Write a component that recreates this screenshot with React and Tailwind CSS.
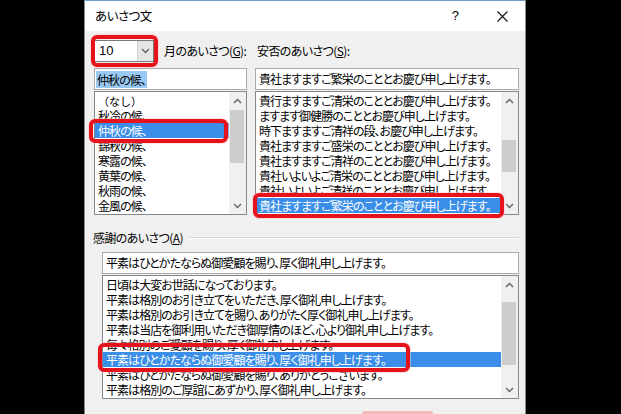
import React from "react";

const jp = "font-['Noto_Sans_CJK_JP',sans-serif] [font-feature-settings:'palt'] tracking-[-0.95px]";

function Chevron({ dir = "down" }) {
  return (
    <svg width="9" height="6" viewBox="0 0 9 6">
      <path
        d={dir === "up" ? "M1 5 L4.5 1.5 L8 5" : "M1 1 L4.5 4.5 L8 1"}
        fill="none"
        stroke="#606060"
        strokeWidth="1.3"
      />
    </svg>
  );
}

function ScrollBar({ thumbTop, thumbHeight }) {
  return (
    <div className="relative w-[17px] h-full bg-[#f0f0f0] shrink-0">
      <div className="h-[17px] flex items-center justify-center">
        <Chevron dir="up" />
      </div>
      <div
        className="absolute left-[1px] right-[2px] bg-[#cdcdcd]"
        style={{ top: thumbTop, height: thumbHeight }}
      />
      <div className="absolute bottom-0 left-0 right-0 h-[17px] flex items-center justify-center">
        <Chevron />
      </div>
    </div>
  );
}

function ListBox({ items, selected, thumbTop, thumbHeight, pad = "pl-[3px]" }) {
  return (
    <div className="flex h-[124px] border border-[#828790] bg-white">
      <div className="flex-1 overflow-hidden pt-[1px]">
        {items.map((t, i) => (
          <div
            key={i}
            className={`h-[15px] leading-[15px] whitespace-nowrap ${pad} ${
              i === selected ? "bg-[#3a8ee8] text-white" : "text-black"
            }`}
          >
            {t}
          </div>
        ))}
      </div>
      <ScrollBar thumbTop={thumbTop} thumbHeight={thumbHeight} />
    </div>
  );
}

const monthItems = [
  <span className="[font-feature-settings:normal] tracking-[0px] text-[11px]">（なし）</span>,
  "秋冷の候、",
  "仲秋の候、",
  "錦秋の候、",
  "寒露の候、",
  "黄葉の候、",
  "秋雨の候、",
  "金風の候、",
];

const safeItems = [
  "貴行ますますご清栄のこととお慶び申し上げます。",
  "ますます御健勝のこととお慶び申し上げます。",
  "時下ますますご清祥の段、お慶び申し上げます。",
  "貴社ますますご盛栄のこととお慶び申し上げます。",
  "貴社ますますご清祥のこととお慶び申し上げます。",
  "貴社いよいよご清栄のこととお慶び申し上げます。",
  "貴社いよいよご清祥のこととお慶び申し上げます。",
  "貴社ますますご繁栄のこととお慶び申し上げます。",
];

const thanksItems = [
  "日頃は大変お世話になっております。",
  "平素は格別のお引き立てをいただき、厚く御礼申し上げます。",
  "平素は格別のお引き立てを賜り、ありがたく厚く御礼申し上げます。",
  "平素は当店を御利用いただき御厚情のほど、心より御礼申し上げます。",
  "毎々格別のご愛顧を賜り、厚く御礼申し上げます。",
  "平素はひとかたならぬ御愛顧を賜り、厚く御礼申し上げます。",
  "平素はひとかたならぬ御愛顧を賜り、ありがとうございます。",
  "平素は格別のご厚誼にあずかり、厚く御礼申し上げます。",
];

function RedBox({ className }) {
  return (
    <div
      className={`absolute border-[4px] border-[#e5131b] rounded-[6px] shadow-[0_0_0_1px_rgba(255,200,200,0.5)] ${className}`}
    />
  );
}

export default function App() {
  return (
    <div className={`relative w-[621px] h-[414px] bg-black overflow-hidden text-[12px] text-black ${jp}`}>
      <div className="flex h-full pl-[84px]">
        <div className="w-[442px] h-full flex flex-col border-x border-[#8a8a8a] border-t border-t-[#6f9bc8]">
          {/* title bar */}
          <div className="h-[30px] bg-white flex items-center pl-[10px] shrink-0">
            <span className="text-[12.5px] tracking-[-0.5px]">あいさつ文</span>
            <span className="ml-auto text-[13px] font-['Liberation_Sans',sans-serif] tracking-[0px] mr-[38px]">?</span>
            <svg width="11" height="11" viewBox="0 0 11 11" className="mr-[17px]">
              <path d="M0.5 0.5 L10.5 10.5 M10.5 0.5 L0.5 10.5" stroke="#111" strokeWidth="1.1" />
            </svg>
          </div>
          {/* body */}
          <div className="flex-1 bg-[#f0f0f0] pl-[9px] pr-[5px]">
            {/* row 1 */}
            <div className="mt-[9px] flex h-[22px] items-center">
              <div className="w-[153px] flex items-center">
                <div className="w-[60px] h-[22px] flex border border-[#7a7a7a] bg-white shrink-0">
                  <div className="flex-1 pl-[4px] leading-[20px] font-['Liberation_Sans',sans-serif] text-[13px] tracking-[0px]">10</div>
                  <div className="w-[16px] bg-[#e5e5e5] border-l border-[#cfcfcf] flex items-center justify-center">
                    <Chevron />
                  </div>
                </div>
                <span className="ml-[10px] whitespace-nowrap tracking-[-0.6px]">
                  月のあいさつ(<span className="underline">G</span>):
                </span>
              </div>
              <div className="ml-[8px] pl-[2px] whitespace-nowrap tracking-[-0.6px]">
                安否のあいさつ(<span className="underline">S</span>):
              </div>
            </div>
            {/* row 2 fields */}
            <div className="mt-[6px] flex gap-[8px]">
              <div className="w-[153px] h-[22px] border border-[#a9a9a9] bg-white flex items-center pl-[1px]">
                <span className="bg-[#99c9f3] leading-[17px] px-[1px]">仲秋の候、</span>
              </div>
              <div className="w-[264px] h-[22px] border border-[#a9a9a9] bg-white flex items-center pl-[3px] whitespace-nowrap">
                貴社ますますご繁栄のこととお慶び申し上げます。
              </div>
            </div>
            {/* row 3 lists */}
            <div className="mt-[1px] flex gap-[8px]">
              <div className="w-[153px]">
                <ListBox items={monthItems} selected={2} thumbTop={18} thumbHeight={53} />
              </div>
              <div className="w-[264px]">
                <ListBox items={safeItems} selected={7} thumbTop={48} thumbHeight={32} />
              </div>
            </div>
            {/* thanks group */}
            <div className="mt-[15px] flex items-center h-[15px] pr-[1px]">
              <span className="whitespace-nowrap -ml-[1px] tracking-[-0.6px]">
                感謝のあいさつ(<span className="underline">A</span>)
              </span>
              <div className="flex-1 ml-[6px] h-[2px] border-t border-[#d5d5d5] border-b border-b-white" />
            </div>
            <div className="ml-[8px] mt-[7px] w-[417px]">
              <div className="h-[22px] border border-[#a9a9a9] bg-white flex items-center pl-[3px] whitespace-nowrap">
                平素はひとかたならぬ御愛顧を賜り、厚く御礼申し上げます。
              </div>
              <div className="mt-[1px]">
                <ListBox items={thanksItems} selected={5} thumbTop={26} thumbHeight={63} />
              </div>
            </div>
          </div>
        </div>
      </div>

      {/* red highlight boxes (overlays) */}
      <RedBox className="left-[91px] top-[35px] w-[67px] h-[32px]" />
      <RedBox className="left-[89px] top-[119px] w-[139px] h-[24px]" />
      <RedBox className="left-[253px] top-[193px] w-[251px] h-[25px]" />
      <RedBox className="left-[98px] top-[343px] w-[312px] h-[29px]" />
      <div className="absolute left-[362px] top-[411px] w-[71px] h-[3px] rounded-t-[3px] bg-[#f4b9b9]" />
    </div>
  );
}
